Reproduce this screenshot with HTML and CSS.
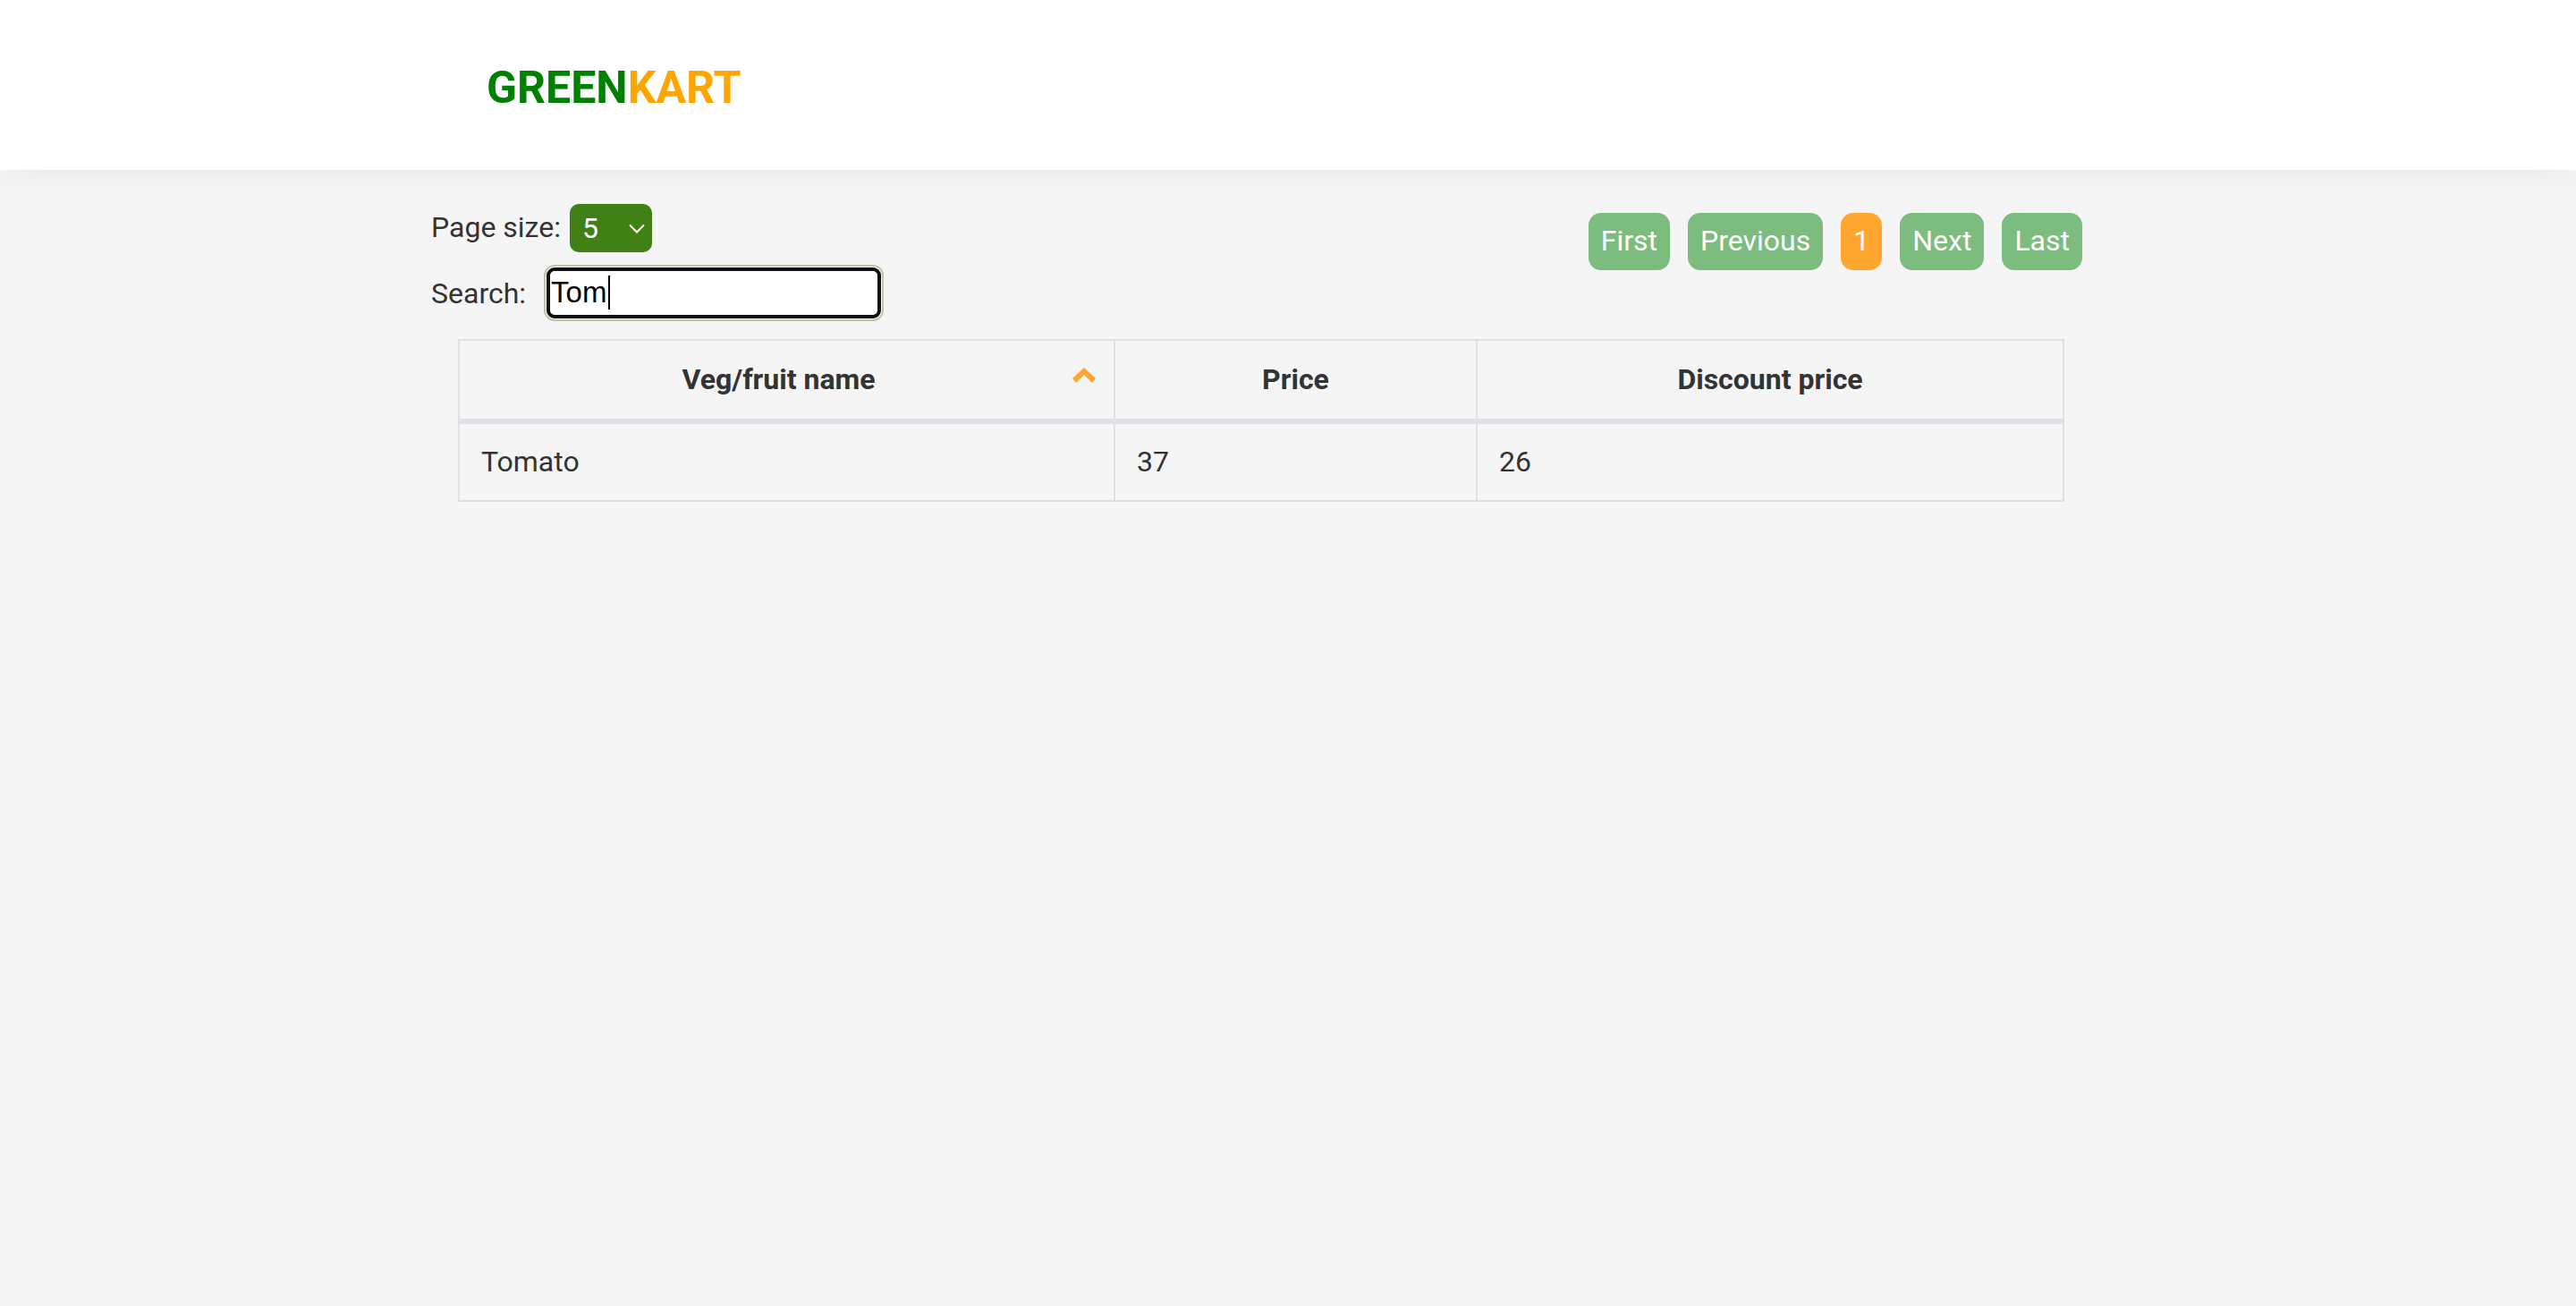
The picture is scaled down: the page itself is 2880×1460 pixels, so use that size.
FILE: index.html
```html
<!DOCTYPE html>
<html lang="en">
<head>
  <meta charset="UTF-8" />
  <meta name="viewport" content="width=device-width, initial-scale=1.0">
  <title>GreenKart</title>
  <link rel="stylesheet" href="styles.css">
</head>
<body>
  <header class="top-bar">
    <div class="brand"><span class="brand-green">GREEN</span><span class="brand-orange">KART</span></div>
  </header>

  <div class="container">
    <div class="toolbar">
      <div class="filters">
        <div class="filter-row">
          <label for="page-menu">Page size:</label>
          <div class="select-wrap">
            <select id="page-menu">
              <option>5</option>
              <option>10</option>
              <option>20</option>
            </select>
            <svg class="select-arrow" viewBox="0 0 18 11" aria-hidden="true"><path d="M1 1.5 L9 9.5 L17 1.5" fill="none" stroke="#fff" stroke-width="2"/></svg>
          </div>
        </div>
        <div class="filter-row search-row">
          <label for="search-field">Search:</label>
          <div class="search-wrap">
            <input type="search" id="search-field" value="Tom">
            <span class="caret"></span>
          </div>
        </div>
      </div>

      <nav class="pagination">
        <a href="#">First</a>
        <a href="#">Previous</a>
        <a href="#" class="active">1</a>
        <a href="#">Next</a>
        <a href="#">Last</a>
      </nav>
    </div>

    <table>
      <thead>
        <tr>
          <th class="col-name">
            Veg/fruit name
            <svg class="sort-icon" viewBox="0 0 26 17" aria-hidden="true"><path d="M13 0 L26 12 L22 17 L13 8 L4 17 L0 12 Z" fill="#ffa62f"/></svg>
          </th>
          <th class="col-price">Price</th>
          <th>Discount price</th>
        </tr>
      </thead>
      <tbody>
        <tr>
          <td>Tomato</td>
          <td>37</td>
          <td>26</td>
        </tr>
      </tbody>
    </table>
  </div>
</body>
</html>
```

FILE: styles.css
```css
* {
  margin: 0;
  padding: 0;
  box-sizing: border-box;
}

body {
  font-family: Roboto, 'Liberation Sans', sans-serif;
  font-size: 32px;
  color: #333;
  background: #f5f5f5;
  min-height: 100vh;
}

/* Header */
.top-bar {
  height: 190px;
  padding: 69px 0 0 544px;
  background: #fff;
  box-shadow: 0 2px 36px rgba(0, 0, 0, 0.06);
}

.brand {
  font-size: 50px;
  font-weight: 700;
  line-height: 58px;
}

.brand-green {
  color: green;
}

.brand-orange {
  color: orange;
}

/* Toolbar */
.container {
  width: 1846px;
  margin-left: 482px;
  padding-top: 38px;
}

.toolbar {
  display: flex;
  justify-content: space-between;
  align-items: flex-start;
}

.filter-row {
  display: flex;
  align-items: center;
  height: 54px;
}

.filter-row label {
  line-height: 53px;
  padding-bottom: 1px;
}

.search-row {
  margin-top: 14px;
  height: 62px;
}

.search-row label {
  line-height: 54px;
  padding: 1px 0 0;
}

.select-wrap {
  position: relative;
  margin-left: 10px;
  width: 92px;
  height: 54px;
}

.select-wrap select {
  appearance: none;
  width: 100%;
  height: 100%;
  padding-left: 14px;
  border: none;
  border-radius: 10px;
  background: #418015;
  color: #fff;
  font-family: inherit;
  font-size: 32px;
}

.select-arrow {
  position: absolute;
  top: 22px;
  right: 8px;
  width: 18px;
  height: 11px;
  pointer-events: none;
}

.search-wrap {
  position: relative;
  margin-left: 23px;
  width: 374px;
  height: 57px;
}

.search-wrap input {
  width: 100%;
  height: 100%;
  padding-left: 1px;
  border: 4px solid #101010;
  border-radius: 9px;
  box-shadow: 0 0 0 1px #fff, 0 0 0 3px #c4c2ac;
  background: #fff;
  color: #000;
  font-family: 'Liberation Sans', sans-serif;
  font-size: 33px;
  appearance: none;
  outline: none;
}

.caret {
  position: absolute;
  left: 69px;
  top: 9px;
  width: 2px;
  height: 38px;
  background: #000;
}

/* Pagination */
.pagination {
  display: flex;
  gap: 20px;
  margin-top: 10px;
}

.pagination a {
  height: 64px;
  padding: 0 14px;
  border-radius: 14px;
  background: #7cbc7e;
  color: #fff;
  line-height: 62px;
  text-decoration: none;
}

.pagination a.active {
  background: #ffa62f;
}

/* Table */
table {
  width: 1796px;
  margin: 21px 0 0 30px;
  border-collapse: collapse;
}

th, td {
  border: 2px solid #dee2e6;
  padding: 0 24px 1px;
  text-align: left;
}

th {
  height: 91px;
  font-weight: 700;
  text-align: center;
  border-bottom-width: 6px;
}

td {
  height: 89px;
}

.col-name {
  position: relative;
  width: 733px;
  padding-right: 42px;
}

.col-price {
  width: 405px;
}

.sort-icon {
  position: absolute;
  top: 30px;
  right: 20px;
  width: 26px;
  height: 17px;
}
```
